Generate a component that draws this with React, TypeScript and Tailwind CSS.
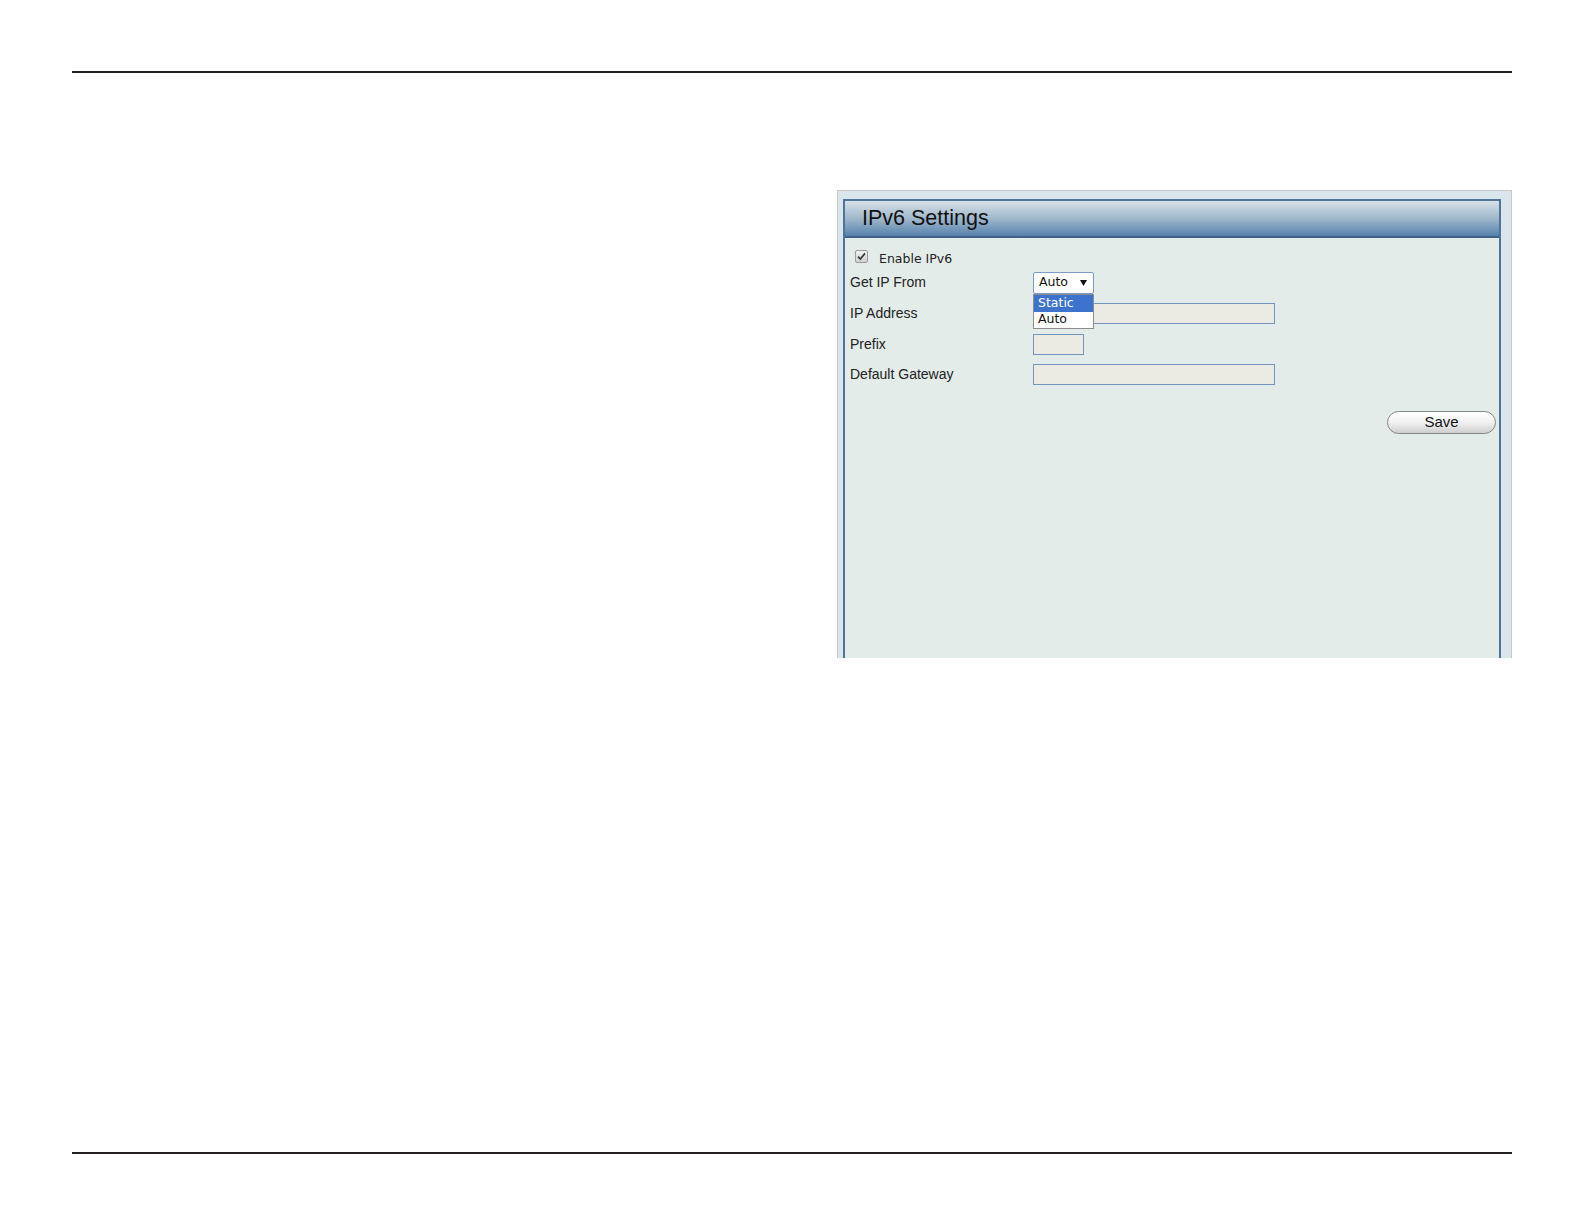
import React from 'react';

const sans = { fontFamily: '"Liberation Sans", Arial, sans-serif' };
const tahoma = { fontFamily: '"DejaVu Sans", Verdana, sans-serif' };

function CheckBox() {
  return (
    <div className="-mt-[5px] w-[13px] h-[13px] border border-[#9a9a9a] rounded-[2px] bg-gradient-to-b from-[#f2f2f2] to-[#d0d0d0] flex items-center justify-center">
      <svg width="11" height="11" viewBox="0 0 11 11">
        <path d="M2 5.6 L4.4 8 L9 2.4" fill="none" stroke="#333" strokeWidth="1.7" />
      </svg>
    </div>
  );
}

function Field({ label, children }: { label: string; children: React.ReactNode }) {
  return (
    <div className="flex items-center h-[21px]">
      <div className="w-[183px] text-[14px] text-[#222]" style={sans}>
        {label}
      </div>
      {children}
    </div>
  );
}

function TextBox({ width }: { width: string }) {
  return <div className={`${width} h-[21px] bg-[#ebebe4] border border-[#7394c0]`} />;
}

export default function App() {
  return (
    <div className="w-[1584px] h-[1224px] bg-white flex flex-col">
      <div className="mt-[71px] ml-[72px] w-[1440px] h-[2px] bg-[#231f20]" />

      <div className="mt-[117px] ml-[837px] w-[675px] h-[468px] border-t border-l border-r border-[#c9c9c9] bg-[#d9e6ec] pl-[5px] pt-[8px] pr-[10px] flex flex-col">
        <div className="flex-1 flex flex-col border-2 border-b-0 border-[#4f739a] bg-[#e4ecea]">
          <div className="h-[37px] border-b-2 border-[#3e6189] bg-gradient-to-b from-[#d6e0e7] via-[#a0b8cc] to-[#5682ac] flex items-center pl-[17px]">
            <span className="text-[21.5px] text-[#111] leading-none" style={sans}>
              IPv6 Settings
            </span>
          </div>

          <div className="flex flex-col pl-[5px] pr-[3px] pt-[11px]">
            <div className="flex items-center h-[19px] pl-[5px] gap-[11px]">
              <CheckBox />
              <span className="text-[12.5px] text-[#222] mt-[2px]" style={tahoma}>
                Enable IPv6
              </span>
            </div>

            <div className="mt-[4px]">
              <Field label="Get IP From">
                <div className="relative">
                  <div className="w-[61px] h-[22px] bg-white border border-[#7a9cc6] rounded-[2px] flex items-center justify-between pl-[5px] pr-[6px]">
                    <span className="text-[12.5px] text-[#111]" style={tahoma}>
                      Auto
                    </span>
                    <svg width="7" height="6" viewBox="0 0 7 6">
                      <path d="M0 0 H7 L3.5 6 Z" fill="#111" />
                    </svg>
                  </div>
                  <div className="absolute left-0 top-[22px] w-[61px] bg-white border border-[#8c8c8c] z-10">
                    <div className="h-[17px] bg-[#3d73cd] text-white flex items-center pl-[4px] text-[12.5px]" style={tahoma}>
                      Static
                    </div>
                    <div className="h-[16px] text-[#111] flex items-center pl-[4px] text-[12.5px]" style={tahoma}>
                      Auto
                    </div>
                  </div>
                </div>
              </Field>
            </div>

            <div className="mt-[10px]">
              <Field label="IP Address">
                <TextBox width="w-[242px]" />
              </Field>
            </div>

            <div className="mt-[10px]">
              <Field label="Prefix">
                <TextBox width="w-[51px]" />
              </Field>
            </div>

            <div className="mt-[9px]">
              <Field label="Default Gateway">
                <TextBox width="w-[242px]" />
              </Field>
            </div>

            <div className="mt-[26px] flex justify-end">
              <div className="w-[109px] h-[23px] rounded-full border border-[#858585] bg-gradient-to-b from-white via-[#f1f1f1] to-[#cfcfcf] flex items-center justify-center shadow-[inset_0_1px_0_#fff]">
                <span className="text-[15px] text-[#111]" style={sans}>
                  Save
                </span>
              </div>
            </div>
          </div>
        </div>
      </div>

      <div className="mt-auto mb-[70px] ml-[72px] w-[1440px] h-[2px] bg-[#231f20]" />
    </div>
  );
}
